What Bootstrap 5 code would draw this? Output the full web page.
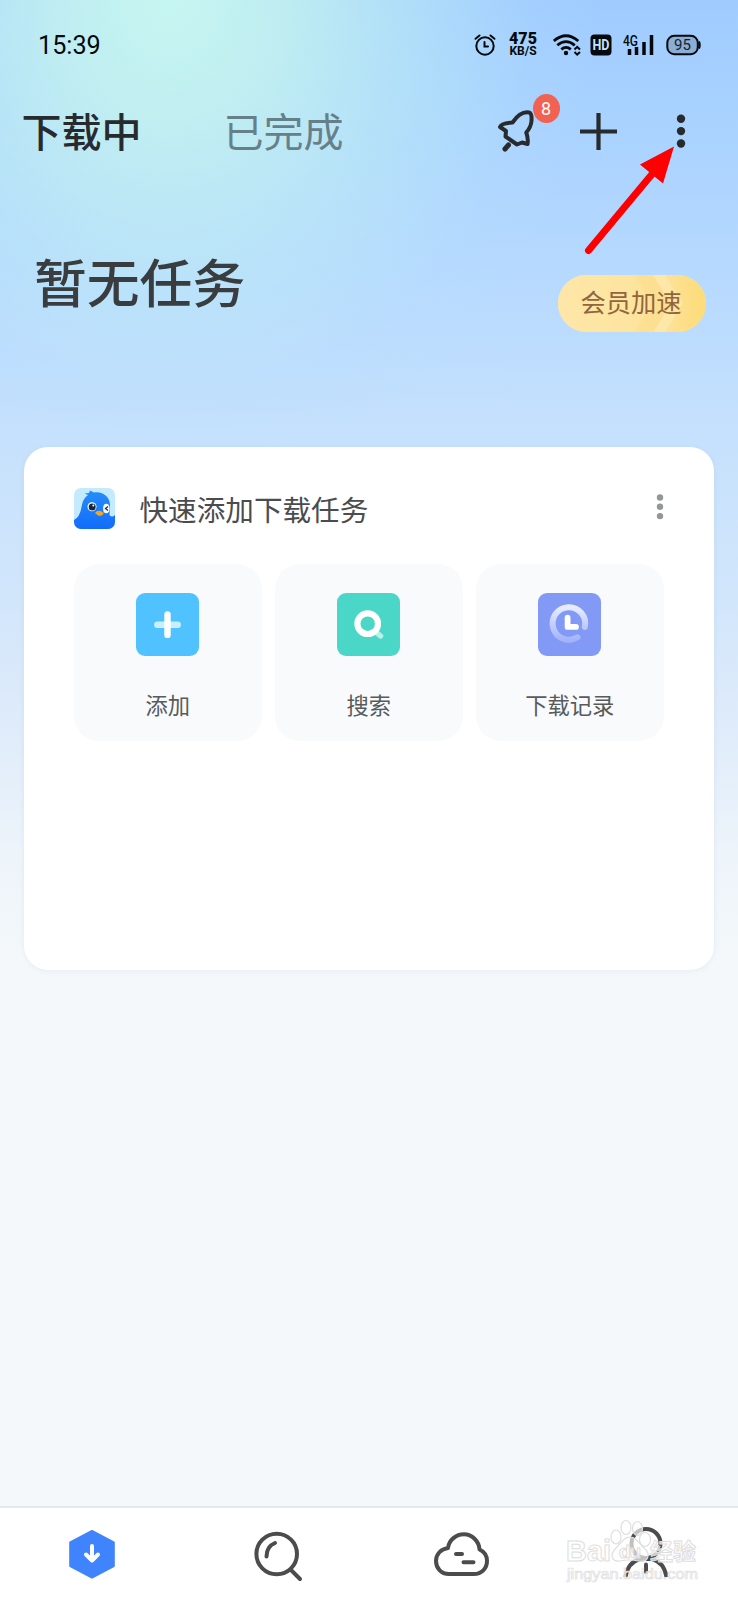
<!DOCTYPE html>
<html lang="zh-CN">
<head>
<meta charset="utf-8">
<meta name="viewport" content="width=device-width, initial-scale=1">
<title>下载</title>
<link href="https://cdn.jsdelivr.net/npm/bootstrap@5.3.0/dist/css/bootstrap.min.css" rel="stylesheet">
<style>
body{font-family:"Noto Sans","Noto Sans CJK SC",sans-serif;background:#f4f8fa;color:#3c4043}
.screen{height:1600px;overflow:hidden;background:
 radial-gradient(ellipse 430px 470px at 170px 0,rgba(202,250,240,.92) 0,rgba(198,245,238,.78) 28%,rgba(190,238,243,.45) 60%,rgba(180,225,250,.14) 85%,rgba(180,220,255,0) 100%),
 linear-gradient(180deg,#9fcbff 0,#a9d2ff 120px,#b8daff 290px,#c6e1fd 440px,#d2e6fb 600px,#deebfa 720px,#edf4fa 850px,#f4f8fa 960px)}
svg{display:block;flex:none}
.cn{font-family:"Noto Sans CJK SC",sans-serif;white-space:nowrap;line-height:1}
.statusbar{height:90px;padding:0 37px 0 38px;color:#05090c}
.clock{font-family:Roboto,sans-serif;font-size:25.2px;line-height:1;padding-top:2px}
.speed{font-family:Roboto,sans-serif;font-weight:700;text-align:center;width:30px}
.speed b{display:block;font-size:16px;line-height:13px}
.speed span{display:block;font-size:12px;line-height:13px;font-weight:700}
.tabs{height:82px;padding-left:21.5px}
.tabs .cn{font-size:40px;padding-bottom:3px}
.tab-on{color:#272b2e;font-weight:500}
.tab-off{color:#668089;font-weight:400}
.count{left:532.5px;top:4px;width:27px;height:29px;background:#f26253;color:#fff;font:400 18px/29px Roboto,sans-serif;text-align:center;border-radius:50%}
.hero{height:275px;padding:0 32px 0 34px}
.headline{font-size:52.8px;font-weight:500;color:#3a3d40;margin-top:81.5px}
.vip{margin-top:102.5px;width:148px;height:57.5px;border-radius:29px;overflow:hidden;background:#fde7a8;color:#93653d}
.vip .cn{font-size:25.3px;padding:0 2px 4px 0}
.sheet{margin:0 24px;height:523px;border-radius:24px;background:#fff;padding:41px 50px 0;box-shadow:0 1px 5px rgba(110,150,190,.12)}
.sheet-title{font-size:28.6px;color:#4a4c4e;font-weight:400}
.tiles{margin-top:35px;gap:13.5px}
.tile{flex:none;width:187.5px;height:176.5px;border-radius:25px;background:#f8fafc;padding-top:29px;color:#585a5c}
.tile .cn{font-size:22.3px;margin-top:37px;font-weight:400}
.bottom{height:94px;border-top:2px solid #e5e8eb;background:#fff}
.mark-text{fill:#fff;fill-opacity:.7;stroke:#dedede;stroke-width:1}
.mark-url{fill:#fff;fill-opacity:.7;stroke:#dedede;stroke-width:.7}
</style>
</head>
<body>
<div class="screen d-flex flex-column position-relative">
  <div class="statusbar d-flex align-items-center justify-content-between">
    <span class="clock">15:39</span>
    <div class="d-flex align-items-center">
      <svg width="22" height="24" viewBox="0 0 22 24" fill="none" stroke="#05090c" stroke-width="2" stroke-linecap="round"><circle cx="11" cy="13" r="8.700"/><path d="M1.500 5.800 5.500 2.500M20.500 5.800 16.500 2.500M10.500 9V13.500H14"/></svg>
      <div class="speed" style="margin-left:12px"><b>475</b><span>KB/S</span></div>
      <svg style="margin-left:15px" width="28" height="24" viewBox="0 0 28 24" fill="none" stroke="#05090c" stroke-width="2.800"><path d="M.8 8Q13 -2.500 25.300 8M4.300 12.300Q13 5 21.800 12.300M8.300 16.300Q13 12.500 17.800 16.300"/><circle cx="13" cy="20" r="2.200" fill="#05090c" stroke="none"/><path d="m21.500 16.500 2.700-2.600L27 16.500M21.500 19l2.700 2.600L27 19" stroke-width="2"/></svg>
      <svg style="margin-left:9px" width="22" height="22"><rect x=".5" y=".5" width="21" height="21" rx="4" fill="#05090c"/><text x="11" y="16" text-anchor="middle" font-family="Roboto" font-weight="700" font-size="14" fill="#c5e0ff" textLength="17" lengthAdjust="spacingAndGlyphs">HD</text></svg>
      <svg style="margin-left:11px" width="32" height="24" viewBox="0 0 32 24"><text x="0" y="12.500" font-family="Roboto" font-weight="500" font-size="14" fill="#05090c" textLength="15" lengthAdjust="spacingAndGlyphs">4G</text><path d="M6.500 16v6M13.500 14v8M21 9v13M28.500 2v20" stroke="#05090c" stroke-width="3.500"/></svg>
      <svg style="margin-left:11px" width="35" height="22" viewBox="0 0 35 22"><rect x="1.300" y="1.800" width="30.500" height="18.400" rx="7" fill="#8caed5" stroke="#05090c" stroke-width="2"/><path d="M33 7.500q1.500 3.500 0 7" stroke="#05090c" stroke-width="2" fill="none"/><text x="16.500" y="16.300" text-anchor="middle" font-family="Roboto" font-size="15" fill="#15202c">95</text></svg>
    </div>
  </div>

  <div class="tabs d-flex align-items-center position-relative">
    <span class="cn tab-on">下载中</span>
    <span class="cn tab-off" style="margin-left:82px">已完成</span>
    <svg style="margin-left:153px" width="38" height="44" viewBox="497 110 38 44" fill="none" stroke="#272b2e" stroke-width="4" stroke-linejoin="round" stroke-linecap="round"><path d="M512.500 123.500C517 117 523 112.500 529 113.500Q532 114 531.500 122Q531 128 526.300 133.500C527.800 138 528.200 141.500 527.500 145L522 143.500 517 145.500 505.500 137.500 506 132 500 128Q501 124 512.500 123.500Z"/><path d="m508.500 146-3.500 4" stroke-width="5"/></svg>
    <span class="count position-absolute">8</span>
    <svg style="margin-left:44px" width="39" height="39" viewBox="0 0 39 39"><path d="M19.500 1v37M1 19.500h37" stroke="#272b2e" stroke-width="4.200"/></svg>
    <svg style="margin-left:58px" width="10" height="36" viewBox="0 0 10 36" fill="#272b2e"><circle cx="5" cy="5.800" r="4.200"/><circle cx="5" cy="18.100" r="4.200"/><circle cx="5" cy="30.500" r="4.200"/></svg>
  </div>

  <div class="hero d-flex justify-content-between align-items-start">
    <div class="cn headline">暂无任务</div>
    <div class="vip position-relative d-flex align-items-center justify-content-center">
      <svg class="position-absolute start-0 top-0" width="148" height="58" viewBox="0 0 148 58"><defs><linearGradient id="gold"><stop offset="0" stop-color="#fde7a8"/><stop offset=".7" stop-color="#fde39b"/><stop offset="1" stop-color="#fddb78"/></linearGradient></defs><path fill="url(#gold)" d="M0 0h148v58H0z"/><path d="M76 0h19l18 28-18 30H76l18-30z" fill="#fddd88" opacity=".55"/><path d="M95 0h12l18 28-18 30H95l18-30z" fill="#fff0bd" opacity=".4"/></svg>
      <span class="cn position-relative">会员加速</span>
    </div>
  </div>

  <div class="sheet">
    <div class="d-flex align-items-center" style="height:41px">
      <svg width="41" height="41" viewBox="0 0 41 41"><defs><clipPath id="app"><rect width="41" height="41" rx="7"/></clipPath><linearGradient id="bird" x2="0" y2="1"><stop offset="0" stop-color="#258dfb"/><stop offset="1" stop-color="#126cf9"/></linearGradient></defs><g clip-path="url(#app)"><path fill="#c4eafd" d="M0 0h41v41H0z"/><path d="M0 32Q6 29 7.500 19Q9 10 14 7L10.500 5.500 15 5 16 2.500 20 4.500C29 3 36 9 36 17L35.500 27Q38 30 41 27V41H0Z" fill="url(#bird)"/><circle cx="18" cy="18.700" r="4.500" fill="#fff"/><circle cx="18.200" cy="19" r="3.500" fill="#132743"/><circle cx="19.300" cy="17.500" r="1" fill="#fff"/><ellipse cx="32.300" cy="20.500" rx="3.200" ry="4.800" fill="#fff"/><path d="m34 18.500-2.500 2 2.500 2" fill="none" stroke="#142b50" stroke-width="1.300"/><path d="M21 25Q24 20.500 30 25Q28 29 24 27.500Z" fill="#f4a51c"/></g></svg>
      <span class="cn sheet-title" style="margin-left:24.500px;padding-top:1px">快速添加下载任务</span>
      <svg class="ms-auto" style="margin-bottom:4px" width="8" height="28" viewBox="0 0 8 28" fill="#949698"><circle cx="4" cy="4.500" r="3.200"/><circle cx="4" cy="13.800" r="3.200"/><circle cx="4" cy="23.100" r="3.200"/></svg>
    </div>
    <div class="tiles d-flex">
      <div class="tile d-flex flex-column align-items-center">
        <svg width="63" height="63"><rect width="63" height="63" rx="9" fill="#50c2ff"/><path d="M21.300 31.700h20.400" stroke="#c5f0ff" stroke-width="6.400" stroke-linecap="round"/><path d="M31.500 21.500v20.400" stroke="#fff" stroke-width="6.400" stroke-linecap="round"/></svg>
        <span class="cn">添加</span>
      </div>
      <div class="tile d-flex flex-column align-items-center">
        <svg width="63" height="63"><rect width="63" height="63" rx="9" fill="#4bd7c7"/><path d="m40 40 3.500 3" stroke="#b9f1e8" stroke-width="5.500" stroke-linecap="round"/><circle cx="30.700" cy="30.700" r="10.300" fill="none" stroke="#fff" stroke-width="6.200"/></svg>
        <span class="cn">搜索</span>
      </div>
      <div class="tile d-flex flex-column align-items-center">
        <svg width="63" height="63"><defs><linearGradient id="ring" x2="0" y2="1"><stop offset="0" stop-color="#e7ecff"/><stop offset="1" stop-color="#a4b4fb"/></linearGradient></defs><rect width="63" height="63" rx="9" fill="#8299f6"/><path d="M39.500 44.300A16.300 16.300 0 1 1 46.800 34" fill="none" stroke="url(#ring)" stroke-width="6" stroke-linecap="round"/><path d="M29.600 24.700v9.200h8.400" fill="none" stroke="#fff" stroke-width="5.800" stroke-linecap="round" stroke-linejoin="round"/></svg>
        <span class="cn">下载记录</span>
      </div>
    </div>
  </div>

  <div class="bottom row g-0 mt-auto">
    <div class="col-3"><svg class="mx-auto" width="50" height="92" viewBox="67 1508 50 92"><path d="M92 1531 113.800 1542.500V1566L92 1577.500 70.200 1566V1542.500Z" fill="#4084fd" stroke="#4084fd" stroke-width="2" stroke-linejoin="round"/><path d="M92 1546v14M86 1554.500 92 1560.500 98 1554.500" fill="none" stroke="#fff" stroke-width="4" stroke-linecap="round" stroke-linejoin="round"/></svg></div>
    <div class="col-3"><svg class="mx-auto" width="54" height="92" viewBox="250 1508 54 92" fill="none" stroke="#4c4c4c" stroke-width="4" stroke-linecap="round"><circle cx="276.700" cy="1554" r="20.300"/><path d="m291 1570 9 9M266.500 1556.500Q266.500 1546.500 275 1543"/></svg></div>
    <div class="col-3"><svg class="mx-auto" width="58" height="92" viewBox="432 1508 58 92" fill="none" stroke="#4c4c4c" stroke-width="4" stroke-linecap="round" stroke-linejoin="round"><path d="M449 1574C441 1574 436 1568 436 1561C436 1554 441 1549 448 1548C449 1540 456 1534.300 464 1534.300C472 1534.300 479 1541 479.500 1549.500C484 1551.500 487 1556 487 1561C487 1568.500 481.500 1574 474 1574Z"/><path d="M456 1554h6M463.500 1562.300h10"/></svg></div>
    <div class="col-3"><svg class="mx-auto" width="54" height="92" viewBox="619 1508 54 92" fill="none" stroke="#4c4c4c" stroke-width="4"><circle cx="646" cy="1543.500" r="14.500"/><path d="M625.500 1577C627 1567 633 1561 640 1559H652C659 1561 665 1567 666.500 1577"/><path d="M646 1564.500v7.500" stroke-linecap="round"/></svg></div>
  </div>

  <!-- translucent site mark over the last tab -->
  <svg class="position-absolute" style="left:560px;top:1515px" width="150" height="80" viewBox="560 1515 150 80">
    <g fill="#fff" fill-opacity=".65" stroke="#dedede" stroke-width="1.200"><ellipse cx="616" cy="1537" rx="5" ry="7"/><ellipse cx="626" cy="1527.500" rx="5" ry="7"/><ellipse cx="637.500" cy="1528.500" rx="5" ry="7"/><ellipse cx="645" cy="1539.500" rx="5.500" ry="7"/><path d="M630 1537C624 1537 621 1543 616 1548C609 1555 612 1562 620 1561Q630 1559 638 1561C649 1563 651 1554 644 1548C639 1543 636 1537 630 1537Z"/></g>
    <g class="mark-text" font-family="Liberation Sans" font-weight="700"><text x="566" y="1561" font-size="29" textLength="45" lengthAdjust="spacingAndGlyphs">Bai</text><text x="619" y="1558" font-size="19" textLength="22">du</text><text x="650" y="1560" font-family="Noto Sans CJK SC" font-size="23" textLength="46">经验</text></g>
    <text class="mark-url" x="567" y="1579" font-family="Liberation Sans" font-size="14.500" textLength="131" lengthAdjust="spacingAndGlyphs">jingyan.baidu.com</text>
  </svg>

  <!-- pointer to the overflow menu -->
  <svg class="position-absolute" style="left:580px;top:140px" width="100" height="120" viewBox="580 140 100 120"><path d="M588.500 250.500 653 173" stroke="#fe0000" stroke-width="7" stroke-linecap="round"/><path d="M674 146.500 640 164.500 663 183.500Z" fill="#fe0000"/></svg>
</div>
<script src="https://cdn.jsdelivr.net/npm/bootstrap@5.3.0/dist/js/bootstrap.bundle.min.js"></script>
</body>
</html>
